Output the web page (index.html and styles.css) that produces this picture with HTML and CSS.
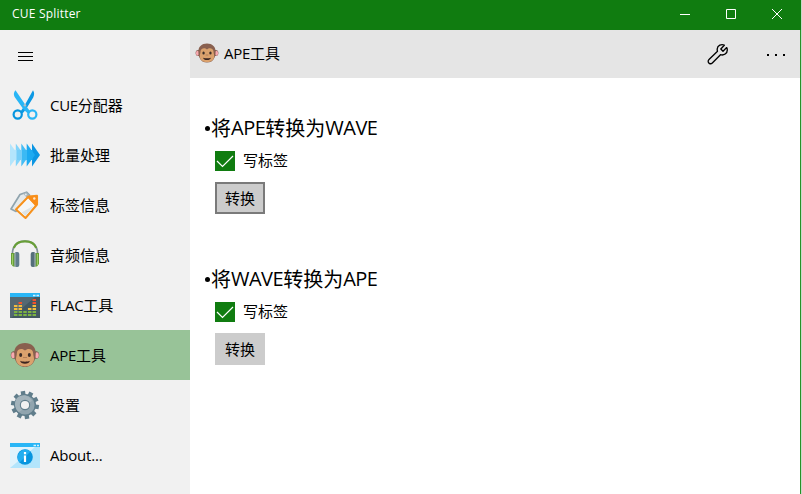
FILE: index.html
```
<!DOCTYPE html>
<html lang="zh-CN">
<head>
<meta charset="utf-8">
<title>CUE Splitter</title>
<link rel="stylesheet" href="styles.css">
</head>
<body>
<svg class="defs" width="0" height="0">
  <symbol id="monkey" viewBox="0 0 30 30">
    <ellipse cx="4" cy="15" rx="3.200" ry="3.800" fill="#795548"/><ellipse cx="26" cy="15" rx="3.200" ry="3.800" fill="#795548"/>
    <ellipse cx="3.200" cy="15.300" rx="2" ry="3" fill="#f8a9b0"/><ellipse cx="26.800" cy="15.300" rx="2" ry="3" fill="#f8a9b0"/>
    <path d="M15 3C8.500 3 4.300 7 4.300 12.500c0 3 0 5.500 1.200 8C7.200 24.800 11 27 15 27s7.800-2.200 9.500-6.500c1.200-2.500 1.200-5 1.200-8C25.700 7 21.500 3 15 3z" fill="#89604f"/>
    <path d="M15 10.500C12.500 7.800 6.800 8.500 6.800 13.500c0 2.500-.8 3-.8 5.500 0 4.500 4 7.400 9 7.400s9-2.900 9-7.400c0-2.500-.8-3-.8-5.500 0-5-5.700-5.700-8.200-3z" fill="#dba26d"/>
    <ellipse cx="10.700" cy="15" rx="1.500" ry="1.900" fill="#3b2d27"/><ellipse cx="19.300" cy="15" rx="1.500" ry="1.900" fill="#3b2d27"/>
    <path d="M13.500 17.500h1M15.500 17.500h1" stroke="#8d5b40"/>
    <path d="M10.200 20.800c2.500 1.200 7 1.200 9.600 0 0 4-9.600 4-9.600 0z" fill="#3b2520"/>
  </symbol>
</svg>
<div class="window">
  <header class="titlebar">
    <span class="title">CUE Splitter</span>
    <svg class="controls" width="138" height="30" viewBox="0 0 138 30" fill="none" stroke="#fff">
      <path d="M18 14.500h10M64.500 9.500h9v9h-9zM110 9l10 10M120 9l-10 10"/>
    </svg>
  </header>
  <div class="body">
    <nav class="sidebar">
      <div class="menu"><svg width="15" height="10" viewBox="0 0 15 10"><path d="M0 .5h15M0 4.500h15M0 8.500h15" stroke="#000"/></svg></div>
      <a class="item">
        <svg class="icon" viewBox="0 0 30 30">
          <path d="M23 .3c1.800 2.500 1.200 5.200.2 7.200L15.500 20l-3 3.500-2-2 3.500-5z" fill="#0d99e4"/>
          <path d="M5.500.3C3.200 3 3.700 5.500 5 7.500L14 20l4.500 4 2-2-4-5.500z" fill="#29b6f6"/>
          <circle cx="7.700" cy="24.500" r="4.100" fill="none" stroke="#0795df" stroke-width="2.200"/><circle cx="22.300" cy="24.500" r="4.100" fill="none" stroke="#29b6f6" stroke-width="2.200"/>
          <circle cx="15" cy="15.200" r="1.300" fill="#b0bec5"/>
        </svg><span><b>CUE</b>分配器</span></a>
      <a class="item">
        <svg class="icon" viewBox="0 0 30 30">
          <path d="M22 3.500 30 15 22 26.500z" fill="#0c96e3"/><path d="M16.700 3.500 25 15 16.700 26.500z" fill="#1caaf1"/><path d="M11.300 3.500 19.500 15 11.300 26.500z" fill="#45bdf5"/><path d="M5.800 3.500 14 15 5.800 26.500z" fill="#81d4fa"/><path d="M0 3.500 8.500 15 0 26.500z" fill="#b3e5fc"/>
          <path d="M16.500 10h6v10h-6z" fill="#1caaf1"/><path d="M11 10h6v10h-6z" fill="#3bb9f4"/><path d="M6 10h6v10H6z" fill="#76cef8"/><path d="M0 10h6.500v10H0z" fill="#b3e5fc"/>
        </svg><span>批量处理</span></a>
      <a class="item">
        <svg class="icon" viewBox="0 0 30 30">
          <path d="m10 4.500 6.500-2.300 3 3L18 10 6 21.500 1 19z" fill="#e5eaec" stroke="#90a4ae" stroke-width="1.700" stroke-linejoin="round"/>
          <path d="m13 3.500 3.500-1.300 3 3L18 9z" fill="#a5b4bb"/><circle cx="15.800" cy="4.500" r="1" fill="#e5eaec"/>
          <path d="M6 19.500 18.500 6.500 27 5.800 27 14.500 15.500 28z" fill="#fff" stroke="#f6921e" stroke-width="2.100" stroke-linejoin="round"/>
          <path d="m18.500 6.500 8.500-.7v8.700l-1.500 1.700-7.500-8z" fill="#f98d18"/><path d="m18.500 9.500 5.500 6-8.500 10.500L8 19.500z" fill="#f4f6f7"/><path d="m24 15.500-8.500 10.500-4-3.500z" fill="#dde4e7"/><circle cx="24.300" cy="8.500" r="1.200" fill="#ffe6ca"/>
        </svg><span>标签信息</span></a>
      <a class="item">
        <svg class="icon" viewBox="0 0 30 30">
          <path d="M2.500 17C1.500 6.500 6.500 1.200 15 1.200S28.500 6.500 27.500 17" fill="none" stroke="#829196" stroke-width="1.700"/>
          <path d="M3.800 8C5.500 3 9.500 1.300 15 1.300S24.500 3 26.200 8" fill="none" stroke="#689f38" stroke-width="2.300"/>
          <path d="M1 13h4v13.500H3L1 24zM29 13h-4v13.500h2l2-2.500z" fill="#689f38"/>
          <path d="M2.500 14v11M27.500 14v11" stroke="#9ccc65"/>
          <rect x="4.500" y="12" width="4.800" height="15" rx="2" fill="#607d8b"/><rect x="20.700" y="12" width="4.800" height="15" rx="2" fill="#546e7a"/>
          <path d="M5 13v13M25 13v13" stroke="#adbac0"/>
        </svg><span>音频信息</span></a>
      <a class="item">
        <svg class="icon" viewBox="0 0 30 30">
          <path d="M0 3h30v25H0z" fill="#546872"/><path d="M1 28 25 7h5v21z" fill="#435862"/><path d="M0 3h30v4H0z" fill="#29b6f6"/><path d="M23 5.500h2.500M26.500 5.500H29" stroke="#d5f1fd" stroke-width="1.500"/>
          <g fill="none" stroke-width="3.500"><path d="M5.700 21v2m0 1v2M10.300 21v2m0 1v2M15 21v2m0 1v2M19.700 21v2m0 1v2M24.300 21v2m0 1v2" stroke="#7cb342"/><path d="M5.700 15v2m0 1v2M10.300 15v2m0 1v2M19.700 18v2M24.300 15v2m0 1v2" stroke="#f3bd3d"/><path d="M10.300 12v2M24.300 9v2m0 1v2" stroke="#f4512c"/></g>
        </svg><span><b>FLAC</b>工具</span></a>
      <a class="item active"><svg class="icon"><use href="#monkey"/></svg><span><b>APE</b>工具</span></a>
      <a class="item">
        <svg class="icon" viewBox="0 0 30 30">
          <g stroke="#607d8b" stroke-width="4.400" transform="rotate(-9 15 15)"><path d="M15 1v28"/><path d="M15 1v28" transform="rotate(36 15 15)"/><path d="M15 1v28" transform="rotate(72 15 15)"/><path d="M15 1v28" transform="rotate(108 15 15)"/><path d="M15 1v28" transform="rotate(144 15 15)"/></g>
          <circle cx="15" cy="15" r="11" fill="#607d8b"/><circle cx="15" cy="15" r="9.600" fill="#90a4ae"/><path d="M7 8c5-5 13-3 15 3l-5 3-5 6-3 2C4 18 4 12 7 8z" fill="#a3b3bb"/><circle cx="15" cy="15" r="5.200" fill="#607d8b"/><circle cx="15" cy="15" r="4.100" fill="#f1f1f1"/>
        </svg><span>设置</span></a>
      <a class="item">
        <svg class="icon" viewBox="0 0 30 30">
          <path d="M0 3h30v25H0z" fill="#b3e5fc"/><path d="M0 7h25L0 28z" fill="#e0f3fc"/><path d="M0 3h30v4H0z" fill="#29b6f6"/><path d="M23.500 5.500H26M27 5.500h2" stroke="#d5f1fd" stroke-width="1.500"/>
          <circle cx="15" cy="17" r="7.800" fill="#0795df"/><path d="M9.500 22.500A7.800 7.800 0 0 1 20.500 11.500z" fill="#22aef0"/><path d="M15 12v2.200M15 15.500v6.500" fill="none" stroke="#fff" stroke-width="2.200"/>
        </svg><span class="latin about">About...</span></a>
    </nav>
    <main class="content">
      <div class="toolbar">
        <svg class="toolicon"><use href="#monkey"/></svg>
        <span class="name"><b>APE</b>工具</span>
        <svg class="wrench" width="22" height="22" viewBox="0 0 22 22" fill="none" stroke="#000" stroke-width="1.350" stroke-linejoin="round"><path d="M17.300 2.200C14.500.8 10.500 2.400 10.200 6c-.1 1 .1 1.600.3 2.300L2 16.500C.5 18 1.200 20 2.500 20.500c1 .4 2 .2 2.800-.6l8.200-8.200c3.400 1 6.800-1.200 6.800-4.700 0-1-.2-1.600-.6-2.400L16 8.200l-2.200-2.200z"/></svg>
        <svg class="more" width="18" height="2" viewBox="0 0 18 2"><path d="M0 0h2v2H0zM8 0h2v2H8zM16 0h2v2h-2z"/></svg>
      </div>
      <section class="group">
        <h2><i></i>将<b>APE</b>转换为<b>WAVE</b></h2>
        <label class="check"><svg width="20" height="20" viewBox="0 0 20 20"><path d="m2 10 5.500 5.500L18 5" fill="none" stroke="#fff" stroke-width="1.200"/></svg><span>写标签</span></label>
        <button class="focused">转换</button>
      </section>
      <section class="group">
        <h2><i></i>将<b>WAVE</b>转换为<b>APE</b></h2>
        <label class="check"><svg width="20" height="20" viewBox="0 0 20 20"><path d="m2 10 5.500 5.500L18 5" fill="none" stroke="#fff" stroke-width="1.200"/></svg><span>写标签</span></label>
        <button>转换</button>
      </section>
    </main>
  </div>
</div>
</body>
</html>
```
FILE: styles.css
```
* { box-sizing: border-box; }
body { margin: 0; overflow: hidden; color: #000; font: 15px/20px "Noto Sans CJK SC", sans-serif; }
b, .latin { font-family: "Open Sans", sans-serif; font-weight: 400; letter-spacing: -0.5px; }
.defs { display: block; }
.window { width: 802px; height: 494px; display: flex; flex-direction: column; border-right: 1px solid #c8d8c8; }
.titlebar { flex: 0 0 30px; display: flex; justify-content: space-between; background: #107c10; color: #fff; }
.title { margin-left: 12px; font: 12px/28px "Open Sans", sans-serif; letter-spacing: 0.2px; }
.controls { margin-right: 1px; }
.body { flex: 1; display: flex; border-right: 1px solid #269226; min-height: 0; }
.sidebar { flex: 0 0 190px; background: #f1f1f1; }
.menu { height: 50px; padding: 22px 0 0 18px; }
.menu svg { display: block; }
.item { display: flex; align-items: center; height: 50px; padding-left: 10px; gap: 10px; }
.item b { letter-spacing: -0.3px; }
.item .about { letter-spacing: -0.2px; }
.icon { width: 30px; height: 30px; flex: none; }
.active { background: #98c398; }
.content { flex: 1; background: #fff; }
.toolbar { height: 48px; background: #e5e5e5; display: flex; align-items: center; padding: 0 15px 0 5px; }
.toolicon { width: 24px; height: 24px; margin-bottom: 2px; }
.name { margin: 0 0 2px 5px; }
.name b { letter-spacing: -0.3px; }
.wrench { margin: 0 38px 1px auto; }
.more { margin-top: 2px; }
.group { padding-left: 25px; height: 151px; }
.group:first-of-type { margin-top: 35px; }
h2 { margin: 0 0 8px -10px; height: 30px; display: flex; align-items: center; font-size: 20px; line-height: 30px; font-weight: 400; }
h2 i { width: 5px; height: 5px; margin-right: 1px; border-radius: 50%; background: #000; }
.check { display: flex; align-items: center; gap: 8px; height: 20px; margin-bottom: 11px; }
.check svg { background: #107c10; }
.check span { margin-bottom: 2px; }
button { display: block; width: 50px; height: 32px; padding: 0; border: 2px solid #ccc; background: #ccc; color: #000; font: inherit; }
.focused { border-color: #7a7a7a; }
```
